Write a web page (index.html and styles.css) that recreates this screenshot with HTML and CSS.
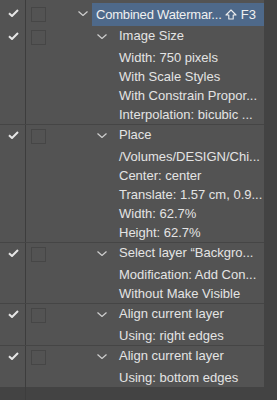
FILE: index.html
```html
<!DOCTYPE html>
<html lang="en">
  <head>
    <meta charset="UTF-8" />
    <title>Actions</title>
    <link rel="stylesheet" href="styles.css">
  </head>
  <body>
    <div class="panel">
      <div class="step action">
        <div class="check">
          <svg width="11" height="8" viewBox="0 0 11 8"><path d="M1 4.2 L4 7 L10 1" /></svg>
        </div>
        <div class="dialog"><span class="box"></span></div>
        <div class="twist">
          <svg width="10" height="5" viewBox="0 0 10 5"><path d="M0.5 0.5 L5 4.5 L9.5 0.5" /></svg>
        </div>
        <div class="title">
          <span class="label">Combined Watermar...</span>
          <span class="key">
            <svg width="12" height="11" viewBox="0 0 12 11"><path d="M6 1 L11 6 H8.2 V10 H3.8 V6 H1 Z" /></svg>
            F3
          </span>
        </div>
      </div>

      <div class="step first">
        <div class="check">
          <svg width="11" height="8" viewBox="0 0 11 8"><path d="M1 4.2 L4 7 L10 1" /></svg>
        </div>
        <div class="dialog"><span class="box"></span></div>
        <div class="twist">
          <svg width="10" height="5" viewBox="0 0 10 5"><path d="M0.5 0.5 L5 4.5 L9.5 0.5" /></svg>
        </div>
        <div class="body">
          <div class="name">Image Size</div>
          <div class="detail">Width: 750 pixels</div>
          <div class="detail">With Scale Styles</div>
          <div class="detail">With Constrain Propor...</div>
          <div class="detail">Interpolation: bicubic ...</div>
        </div>
      </div>

      <div class="step">
        <div class="check">
          <svg width="11" height="8" viewBox="0 0 11 8"><path d="M1 4.2 L4 7 L10 1" /></svg>
        </div>
        <div class="dialog"><span class="box"></span></div>
        <div class="twist">
          <svg width="10" height="5" viewBox="0 0 10 5"><path d="M0.5 0.5 L5 4.5 L9.5 0.5" /></svg>
        </div>
        <div class="body">
          <div class="name">Place</div>
          <div class="detail">/Volumes/DESIGN/Chi...</div>
          <div class="detail">Center: center</div>
          <div class="detail">Translate: 1.57 cm, 0.9...</div>
          <div class="detail">Width: 62.7%</div>
          <div class="detail">Height: 62.7%</div>
        </div>
      </div>

      <div class="step">
        <div class="check">
          <svg width="11" height="8" viewBox="0 0 11 8"><path d="M1 4.2 L4 7 L10 1" /></svg>
        </div>
        <div class="dialog"><span class="box"></span></div>
        <div class="twist">
          <svg width="10" height="5" viewBox="0 0 10 5"><path d="M0.5 0.5 L5 4.5 L9.5 0.5" /></svg>
        </div>
        <div class="body">
          <div class="name">Select layer “Backgro...</div>
          <div class="detail">Modification: Add Con...</div>
          <div class="detail">Without Make Visible</div>
        </div>
      </div>

      <div class="step">
        <div class="check">
          <svg width="11" height="8" viewBox="0 0 11 8"><path d="M1 4.2 L4 7 L10 1" /></svg>
        </div>
        <div class="dialog"><span class="box"></span></div>
        <div class="twist">
          <svg width="10" height="5" viewBox="0 0 10 5"><path d="M0.5 0.5 L5 4.5 L9.5 0.5" /></svg>
        </div>
        <div class="body">
          <div class="name">Align current layer</div>
          <div class="detail">Using: right edges</div>
        </div>
      </div>

      <div class="step">
        <div class="check">
          <svg width="11" height="8" viewBox="0 0 11 8"><path d="M1 4.2 L4 7 L10 1" /></svg>
        </div>
        <div class="dialog"><span class="box"></span></div>
        <div class="twist">
          <svg width="10" height="5" viewBox="0 0 10 5"><path d="M0.5 0.5 L5 4.5 L9.5 0.5" /></svg>
        </div>
        <div class="body">
          <div class="name">Align current layer</div>
          <div class="detail">Using: bottom edges</div>
        </div>
      </div>
    </div>

    <div class="tail">
      <div class="check"></div>
    </div>
  </body>
</html>
```

FILE: styles.css
```css
body {
  font-family: "Liberation Sans", Arial, sans-serif;
  font-size: 13px;
  background-color: #434343;
  color: #e4e4e4;
  margin: 0;
  padding: 0;
}

.panel {
  width: 264px;
  background-color: #535353;
  padding-top: 3px;
}

.step {
  display: flex;
  border-top: 1px solid #454545;
}

.step.action,
.step.first {
  border-top: none;
}

.check {
  width: 26px;
  border-right: 1px solid #3d3d3d;
  display: flex;
  justify-content: center;
  padding-top: 6px;
  padding-left: 2px;
  box-sizing: border-box;
}

.check svg path {
  fill: none;
  stroke: #e6e6e6;
  stroke-width: 2;
  stroke-linejoin: round;
}

.dialog {
  width: 33px;
  padding: 4px 0 0 5px;
  box-sizing: border-box;
}

.box {
  display: block;
  width: 15px;
  height: 15px;
  box-sizing: border-box;
  border: 1px solid #464646;
}

.twist {
  width: 53px;
  padding: 8px 0 0 38px;
  box-sizing: border-box;
}

.twist svg {
  display: block;
}

.twist svg path {
  fill: none;
  stroke: #cfcfcf;
  stroke-width: 1.2;
}

.action {
  height: 23px;
}

.action .check {
  margin-top: -3px;
  padding-top: 9px;
  height: 26px;
}

.action .twist {
  width: 33px;
  padding-left: 19px;
}

.title {
  flex: 1;
  min-width: 0;
  display: flex;
  justify-content: space-between;
  align-items: center;
  background-color: #4e698a;
  color: #f0f0f0;
  padding: 0 8px 0 4px;
  height: 23px;
  white-space: nowrap;
}

.label {
  letter-spacing: -0.2px;
}

.key {
  display: flex;
  align-items: center;
  gap: 4px;
}

.key svg path {
  fill: none;
  stroke: #eeeeee;
  stroke-width: 1.1;
  stroke-linejoin: round;
}

.body {
  flex: 1;
  padding-left: 7px;
  white-space: nowrap;
}

.name {
  line-height: 20px;
  padding-bottom: 2px;
}

.detail {
  line-height: 19px;
}

.tail {
  display: flex;
  height: 13px;
}
```
